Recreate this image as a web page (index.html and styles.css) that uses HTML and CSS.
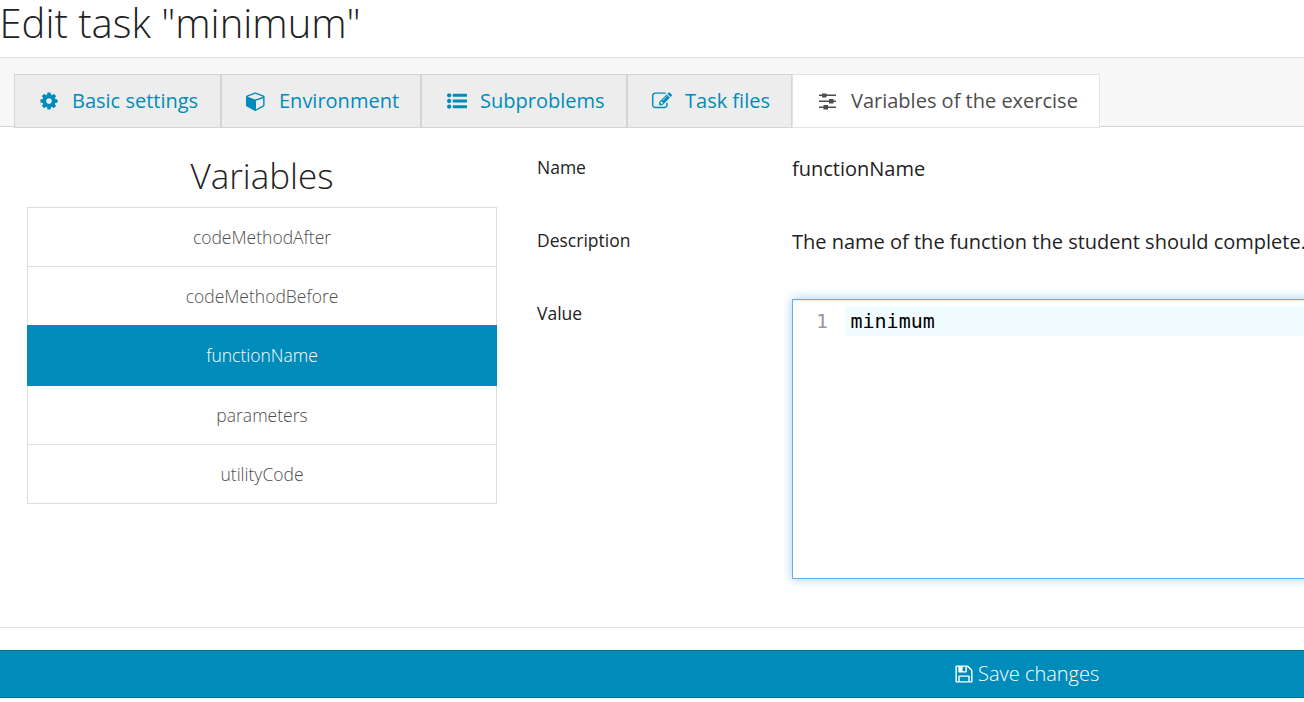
FILE: index.html
```html
<!DOCTYPE html>
<html lang="en">
<head>
<meta charset="utf-8">
<title>Edit task "minimum"</title>
<link rel="stylesheet" href="styles.css">
</head>
<body>
<h1 class="title">Edit task "minimum"</h1>
<nav class="tabbar">
  <a class="tab tab-basic"><svg class="icon" viewBox="0 0 1792 1792"><path d="M1152 896q0-106-75-181t-181-75-181 75-75 181 75 181 181 75 181-75 75-181zm512-109v222q0 12-8 23t-20 13l-185 28q-19 54-39 91 35 50 107 138 10 12 10 25t-9 23q-27 37-99 108t-94 71q-12 0-26-9l-138-108q-44 23-91 38-16 136-29 186-7 28-36 28h-222q-14 0-24.5-8.5t-11.5-21.5l-28-184q-49-16-90-37l-141 107q-10 9-25 9-14 0-25-11-126-114-165-168-7-10-7-23 0-12 8-23 15-21 51-66.5t54-70.5q-27-50-41-99l-183-27q-13-2-21-12.5t-8-23.5v-222q0-12 8-23t19-13l186-28q14-46 39-92-40-57-107-138-10-12-10-24 0-10 9-23 26-36 98.5-107.5t94.5-71.5q13 0 26 10l138 107q44-23 91-38 16-136 29-186 7-28 36-28h222q14 0 24.5 8.5t11.5 21.5l28 184q49 16 90 37l142-107q9-9 24-9 13 0 25 10 129 119 165 170 7 8 7 22 0 12-8 23-15 21-51 66.5t-54 70.5q26 50 41 98l183 28q13 2 21 12.5t8 23.5z"/></svg><span>Basic settings</span></a>
  <a class="tab tab-env"><svg class="icon" viewBox="0 0 1792 1792"><path d="M896 1629l640-349v-636l-640 233v752zm-64-865l698-254-698-254-698 254zm832-252v768q0 35-18 65t-49 47l-704 384q-28 16-61 16t-61-16l-704-384q-31-17-49-47t-18-65v-768q0-40 23-73t61-47l704-256q22-8 44-8t44 8l704 256q38 14 61 47t23 73z"/></svg><span>Environment</span></a>
  <a class="tab tab-sub"><svg class="icon" viewBox="0 0 1792 1792"><circle cx="192" cy="384" r="192"/><circle cx="192" cy="896" r="192"/><circle cx="192" cy="1408" r="192"/><path d="M544 256h1216q32 0 32 32v192q0 32-32 32H544q-32 0-32-32V288q0-32 32-32zM544 768h1216q32 0 32 32v192q0 32-32 32H544q-32 0-32-32V800q0-32 32-32zM544 1280h1216q32 0 32 32v192q0 32-32 32H544q-32 0-32-32v-192q0-32 32-32z"/></svg><span>Subproblems</span></a>
  <a class="tab tab-files"><svg class="icon" viewBox="0 0 1792 1792"><path d="M888 1184l116-116-152-152-116 116v56h96v96h56zm440-720q-16-16-33 1l-350 350q-17 17-1 33t33-1l350-350q17-17 1-33zm80 594v190q0 119-84.5 203.5t-203.5 84.5h-832q-119 0-203.5-84.5t-84.5-203.5v-832q0-119 84.5-203.5t203.5-84.5h832q63 0 117 25 15 7 18 23 3 17-9 29l-49 49q-14 14-32 8-23-6-45-6h-832q-66 0-113 47t-47 113v832q0 66 47 113t113 47h832q66 0 113-47t47-113v-126q0-13 9-22l64-64q15-15 35-7t20 29zm-96-738l288 288-672 672h-288v-288zm444 132l-92 92-288-288 92-92q28-28 68-28t68 28l152 152q28 28 28 68t-28 68z"/></svg><span>Task files</span></a>
  <a class="tab tab-vars active"><svg class="icon" viewBox="0 0 20 20"><path d="M1 3.500h3v-1h4.500v1h9.500v1.500h-9.500v1.500h-4.500v-1.500h-3zM1 9.500h10v-1.500h4.500v1.500h2.500v1.500h-2.500v1.500h-4.500v-1.500h-10zM1 15.500h4.500v-1.500h4.500v1.500h8v1.500h-8v1.500h-4.500v-1.500h-4.500z"/></svg><span>Variables of the exercise</span></a>
</nav>
<main class="content">
  <section class="variables">
    <h2>Variables</h2>
    <ul>
      <li>codeMethodAfter</li>
      <li>codeMethodBefore</li>
      <li class="selected">functionName</li>
      <li>parameters</li>
      <li>utilityCode</li>
    </ul>
  </section>
  <section class="details">
    <div class="row"><div class="label">Name</div><div class="value">functionName</div></div>
    <div class="row"><div class="label">Description</div><div class="value">The name of the function the student should complete.</div></div>
    <div class="row"><div class="label">Value</div><div class="editor"><div class="line"><span class="number">1</span><code>minimum</code></div></div></div>
  </section>
</main>
<hr>
<button class="save"><svg class="icon" viewBox="0 0 1792 1792"><path d="M512 1536h768v-384h-768v384zm896 0h128v-896q0-14-10-38.500t-20-34.500l-281-281q-10-10-34-20t-39-10v416q0 40-28 68t-68 28h-576q-40 0-68-28t-28-68v-416h-128v1280h128v-416q0-40 28-68t68-28h832q40 0 68 28t28 68v416zm-384-928v-320q0-13-9.500-22.500t-22.500-9.500h-192q-13 0-22.500 9.500t-9.500 22.500v320q0 13 9.500 22.500t22.500 9.500h192q13 0 22.500-9.500t9.500-22.500zm640 32v928q0 40-28 68t-68 28h-1344q-40 0-68-28t-28-68v-1344q0-40 28-68t68-28h928q40 0 88 20t76 48l280 280q28 28 48 76t20 88z"/></svg><span>Save changes</span></button>
</body>
</html>
```
FILE: styles.css
```css
* { box-sizing: border-box; }
body {
  margin: 0;
  height: 702px;
  overflow: hidden;
  background: #fff;
  color: #222;
  font: 20px/30px "Open Sans", sans-serif;
}
.icon { fill: currentColor; width: 20px; height: 20px; flex: none; }
.title {
  margin: 0;
  height: 57px;
  font-size: 40px;
  line-height: 46px;
  font-weight: 300;
  text-indent: -0.5px;
}
.tabbar {
  display: flex;
  height: 70px;
  padding: 16px 0 0 14px;
  background: #f7f7f7;
  border-top: 1px solid #ddd;
  border-bottom: 1px solid #d5d5d5;
}
.tab {
  display: flex;
  align-items: center;
  gap: 13px;
  height: 54px;
  padding-left: 24px;
  background: #ededed;
  border: 1px solid #d5d5d5;
  color: #008cba;
  white-space: nowrap;
}
.tab.active { background: #fff; border-color: #e3e3e3; color: #4d4d4d; }
.tab-basic { width: 207px; }
.tab-env { width: 200px; }
.tab-sub { width: 206px; padding-left: 25px; }
.tab-files { width: 165px; }
.tab-vars { width: 308px; padding-left: 25px; }
.content { display: flex; height: 500px; }
.variables { width: 470px; margin-left: 27px; flex: none; text-align: center; }
.variables h2 {
  margin: 0;
  padding-top: 25px;
  height: 80px;
  font-size: 35px;
  line-height: 48px;
  font-weight: 300;
}
.variables ul { margin: 0; padding: 0; list-style: none; }
.variables li {
  height: 59px;
  border: 1px solid #ddd;
  border-bottom: 0;
  font-size: 17.5px;
  line-height: 59px;
  font-weight: 300;
  color: #4d4d4d;
}
.variables li.selected { height: 61px; background: #008cba; border-color: #008cba; color: #fff; }
.variables li.selected + li { border-top: 0; height: 58px; }
.variables li:last-child { border-bottom: 1px solid #ddd; height: 60px; }
.details { width: 767px; margin-left: 40px; flex: none; }
.row { display: flex; height: 73px; padding-top: 26px; }
.label { width: 255px; flex: none; font-size: 17.5px; line-height: 28px; }
.value { line-height: 32px; white-space: nowrap; }
.editor {
  width: 530px;
  height: 280px;
  flex: none;
  padding-top: 6px;
  border: 1px solid #66afe9;
  box-shadow: inset 0 1px 1px rgba(0, 0, 0, .075), 0 0 10px rgba(102, 175, 233, .6);
}
.line { display: flex; font: 20px/30px "DejaVu Sans Mono", monospace; height: 30px; }
.number { width: 52px; padding-right: 17px; text-align: right; color: #999; }
code { flex: 1; padding-left: 5.5px; font: inherit; color: #000; background: #f0fcff; }
.variables li:nth-child(2) { height: 59px; }
hr { margin: 0; border: 0; border-top: 1px solid #ddd; }
.save {
  display: flex;
  align-items: center;
  width: 100%;
  height: 48px;
  margin: 22px 0 0;
  padding: 0 0 0 954px;
  gap: 4px;
  border: 0 solid #007095;
  border-width: 1px 0;
  background: #008cba;
  color: #fff;
  font: 300 20px/30px "Open Sans", sans-serif;
}
```
